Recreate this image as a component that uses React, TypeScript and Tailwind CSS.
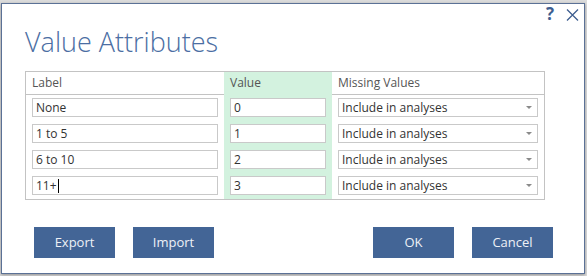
import React from 'react';

const rows = [
  { label: 'None', value: '0' },
  { label: '1 to 5', value: '1' },
  { label: '6 to 10', value: '2' },
  { label: '11+', value: '3', caret: true },
];

const font = "font-['Open_Sans','Liberation_Sans',sans-serif]";

const Field: React.FC<{ text: string; caret?: boolean }> = ({ text, caret }) => (
  <div className="flex h-[19px] items-center border border-[#c9c9c9] bg-white pl-[3px] text-[12px] leading-none text-[#333]">
    {text}
    {caret && <span className="ml-[1px] h-[14px] w-[1px] bg-black" />}
  </div>
);

const Select: React.FC = () => (
  <div className="flex h-[19px] items-center justify-between border border-[#c9c9c9] bg-white pl-[3px] pr-[5px] text-[12px] leading-none text-[#333]">
    <span>Include in analyses</span>
    <span className="h-0 w-0 border-x-[3px] border-t-[3px] border-x-transparent border-t-[#8a8a8a]" />
  </div>
);

const Button: React.FC<{ children: React.ReactNode }> = ({ children }) => (
  <button
    type="button"
    className="flex h-[31px] w-[81px] items-center justify-center bg-[#436596] text-[13px] text-[#eef1f6]"
  >
    {children}
  </button>
);

export default function App() {
  return (
    <div className={`h-[276px] w-[587px] overflow-hidden bg-[#dcdcdc] pl-[1px] pt-[3px] ${font}`}>
      <div className="h-[271px] w-[584px] border border-[#5b7196] bg-white shadow-[0_1px_3px_rgba(0,0,0,0.35)]">
        {/* title bar icons */}
        <div className="flex h-[20px] items-start justify-end gap-[12px] pr-[5px] pt-[1px] text-[#3e5e90]">
          <span className="text-[17px] font-bold leading-[18px]">?</span>
          <svg width="13" height="12" viewBox="0 0 13 12" className="mt-[4px]">
            <path d="M1 0.5 L12 11.5 M12 0.5 L1 11.5" stroke="#3e5e90" strokeWidth="1.3" fill="none" />
          </svg>
        </div>

        <h1 className="ml-[23px] text-[27px] font-light leading-[36px] text-[#4b6ea3]">Value Attributes</h1>

        {/* table */}
        <div className="ml-[23px] mt-[11px] flex w-[520px] border border-[#c3c3c3]">
          <div className="w-[198px]">
            <div className="h-[23px] border-b border-[#c3c3c3] pl-[6px] text-[12px] leading-[21px] text-[#555]">Label</div>
            <div className="flex flex-col gap-[7px] px-[6px] pb-[4px] pt-[3px]">
              {rows.map((r) => (
                <Field key={r.label} text={r.label} caret={r.caret} />
              ))}
            </div>
          </div>
          <div className="w-[108px] bg-[#d3f2df]">
            <div className="h-[23px] pl-[6px] text-[12px] leading-[21px] text-[#555]">Value</div>
            <div className="flex flex-col gap-[7px] px-[6px] pb-[4px] pt-[3px]">
              {rows.map((r) => (
                <Field key={r.value} text={r.value} />
              ))}
            </div>
          </div>
          <div className="flex-1">
            <div className="h-[23px] border-b border-[#c3c3c3] pl-[6px] text-[12px] leading-[21px] text-[#555]">Missing Values</div>
            <div className="flex flex-col gap-[7px] px-[6px] pb-[4px] pt-[3px]">
              {rows.map((r) => (
                <Select key={r.label} />
              ))}
            </div>
          </div>
        </div>

        {/* buttons */}
        <div className="mt-[27px] flex justify-between pl-[32px] pr-[31px]">
          <div className="flex gap-[18px]">
            <Button>Export</Button>
            <Button>Import</Button>
          </div>
          <div className="flex gap-[18px]">
            <Button>OK</Button>
            <Button>Cancel</Button>
          </div>
        </div>
      </div>
    </div>
  );
}
